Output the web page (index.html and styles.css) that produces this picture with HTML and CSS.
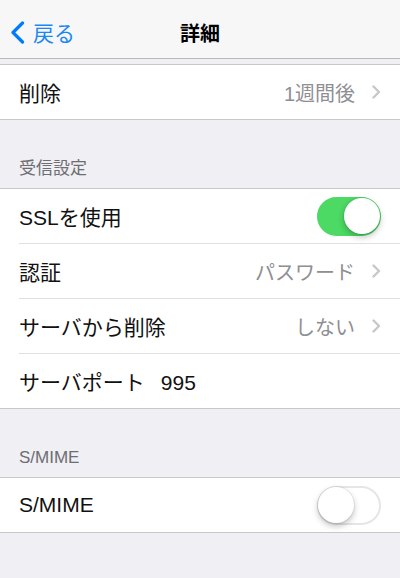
FILE: index.html
```html
<!doctype html>
<html lang="ja">
  <head>
    <meta charset="UTF-8" />
    <meta name="viewport" content="width=device-width, initial-scale=1.0" />
    <title>詳細</title>
    <link rel="stylesheet" href="styles.css">
  </head>

  <body>
    <header class="navbar">
      <a class="back" href="#">
        <svg class="back-icon" width="15" height="23" viewBox="0 0 15 23">
          <polyline points="12.5,2 3,11.5 12.5,21" fill="none" stroke="#007aff" stroke-width="3.2" stroke-linecap="round" stroke-linejoin="round"></polyline>
        </svg>
        戻る
      </a>
      <h1 class="title">詳細</h1>
    </header>

    <section class="group first">
      <div class="row">
        <div class="row-body">
          <span class="label">削除</span>
          <span class="value">1週間後</span>
          <svg class="chevron" width="9" height="14" viewBox="0 0 9 14">
            <polyline points="1.5,1.5 7,7 1.5,12.5" fill="none" stroke="#c7c7cc" stroke-width="2.4" stroke-linecap="round" stroke-linejoin="round"></polyline>
          </svg>
        </div>
      </div>
    </section>

    <div class="section-header">受信設定</div>
    <section class="group">
      <div class="row">
        <div class="row-body">
          <span class="label">SSLを使用</span>
          <span class="switch on"><span class="knob"></span></span>
        </div>
      </div>
      <div class="row">
        <div class="row-body">
          <span class="label">認証</span>
          <span class="value">パスワード</span>
          <svg class="chevron" width="9" height="14" viewBox="0 0 9 14">
            <polyline points="1.5,1.5 7,7 1.5,12.5" fill="none" stroke="#c7c7cc" stroke-width="2.4" stroke-linecap="round" stroke-linejoin="round"></polyline>
          </svg>
        </div>
      </div>
      <div class="row">
        <div class="row-body">
          <span class="label">サーバから削除</span>
          <span class="value">しない</span>
          <svg class="chevron" width="9" height="14" viewBox="0 0 9 14">
            <polyline points="1.5,1.5 7,7 1.5,12.5" fill="none" stroke="#c7c7cc" stroke-width="2.4" stroke-linecap="round" stroke-linejoin="round"></polyline>
          </svg>
        </div>
      </div>
      <div class="row">
        <div class="row-body">
          <span class="label">サーバポート<span class="port">995</span></span>
        </div>
      </div>
    </section>

    <div class="section-header">S/MIME</div>
    <section class="group">
      <div class="row">
        <div class="row-body">
          <span class="label">S/MIME</span>
          <span class="switch"><span class="knob"></span></span>
        </div>
      </div>
    </section>
  </body>
</html>
```

FILE: styles.css
```css
* {
  box-sizing: border-box;
  padding: 0;
  margin: 0;
}

html,
body {
  background: #efeff4;
}

body {
  font-family: 'Liberation Sans', 'Noto Sans CJK JP', sans-serif;
  color: #000;
}

.navbar {
  height: 59px;
  padding-top: 6px;
  background: #f7f7f8;
  border-bottom: 1px solid #b9b9bc;
  display: flex;
  align-items: center;
  justify-content: center;
  position: relative;
}

.back {
  position: absolute;
  left: 10px;
  top: 6px;
  bottom: 0;
  display: flex;
  align-items: center;
  gap: 8px;
  color: #1b87f5;
  font-size: 21px;
  text-decoration: none;
}

.title {
  font-size: 20px;
  font-weight: bold;
}

.group {
  background: #fff;
  border-top: 1px solid #c8c7cc;
  border-bottom: 1px solid #c8c7cc;
}

.group.first {
  margin-top: 5px;
}

.row {
  padding-left: 19px;
}

.row-body {
  height: 55px;
  padding-right: 19px;
  display: flex;
  align-items: center;
  border-bottom: 1px solid #e0e0e3;
}

.row:last-child .row-body {
  height: 54px;
  border-bottom: none;
}

.label {
  flex: 1;
  font-size: 21px;
  color: #111;
}

.port {
  margin-left: 16px;
}

.value {
  font-size: 20px;
  color: #8e8e93;
}

.chevron {
  margin-left: 17px;
}

.section-header {
  height: 68px;
  padding: 0 19px 9px;
  display: flex;
  align-items: flex-end;
  font-size: 17px;
  line-height: 20px;
  color: #6d6d72;
}

.switch {
  width: 64px;
  height: 39px;
  border-radius: 20px;
  border: 2px solid #e6e6e6;
  background: #fff;
  display: flex;
  align-items: center;
  justify-content: flex-start;
}

.switch.on {
  background: #4cd964;
  border-color: #4cd964;
  justify-content: flex-end;
}

.knob {
  width: 36px;
  height: 36px;
  margin: -1px;
  border-radius: 50%;
  background: #fff;
  box-shadow: 0 3px 6px rgba(0, 0, 0, 0.25), 0 0 0 1px rgba(0, 0, 0, 0.06);
}
```
